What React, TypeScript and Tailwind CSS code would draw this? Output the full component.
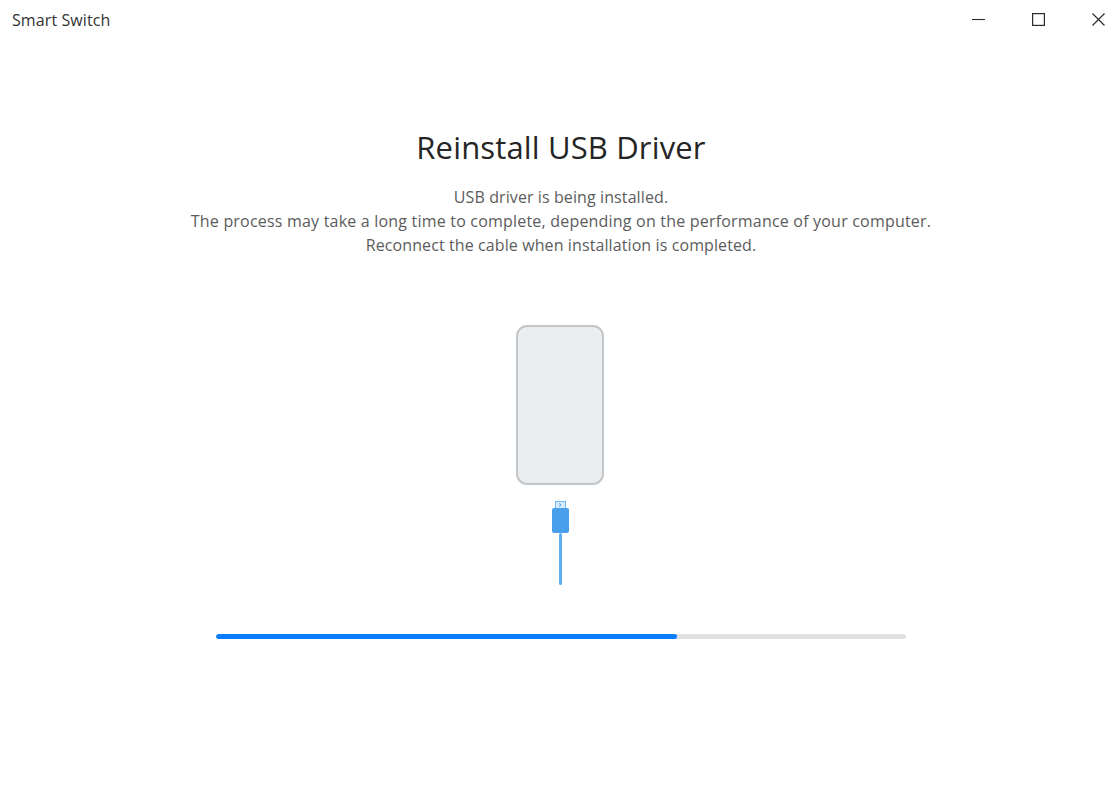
function WindowButtons() {
    return (
        <div className="flex flex-row items-center gap-[47px] pr-[13px]">
            <button className="flex items-center justify-center">
                <svg width="13" height="13" viewBox="0 0 13 13"><path d="M0 6.5h13" stroke="#2b2b2b" strokeWidth="1.1" /></svg>
            </button>
            <button className="flex items-center justify-center">
                <svg width="13" height="13" viewBox="0 0 13 13" fill="none"><rect x="0.6" y="0.6" width="11.8" height="11.8" stroke="#2b2b2b" strokeWidth="1.2" /></svg>
            </button>
            <button className="flex items-center justify-center">
                <svg width="13" height="13" viewBox="0 0 13 13" fill="none"><path d="M0.5 0.5l12 12M12.5 0.5l-12 12" stroke="#2b2b2b" strokeWidth="1.2" /></svg>
            </button>
        </div>
    );
}

function UsbCable() {
    return (
        <svg width="20" height="86" viewBox="0 0 20 86" className="mt-[16px]">
            <rect x="4.5" y="0.5" width="10" height="7" fill="#d6eafc" stroke="#72b9f5" strokeWidth="1" />
            <path d="M8 2.5l2 1.5-2 1.5" fill="none" stroke="#5aa9ee" strokeWidth="1" />
            <rect x="1" y="7" width="17" height="25" rx="2" fill="#4a9fec" />
            <rect x="8" y="32" width="3" height="52" rx="1.5" fill="#5cb0f2" />
        </svg>
    );
}

export default function App() {
    return (
        <div className="w-[1118px] h-[803px] bg-white flex flex-col overflow-hidden font-['Open_Sans','Noto_Sans',sans-serif]">
            <div className="h-[39px] flex flex-row items-center justify-between shrink-0">
                <div className="pl-[12px] text-[16px] tracking-[0.1px] text-[#333333]">Smart Switch</div>
                <WindowButtons />
            </div>
            <div className="flex flex-col items-center pl-[4px]">
                <h1 className="mt-[86px] text-[31px] leading-[44px] tracking-[0.15px] text-[#252525]">Reinstall USB Driver</h1>
                <div className="mt-[16px] text-center text-[16px] leading-[24px] text-[#5c5c5c]">
                    <p className="tracking-[0.1px]">USB driver is being installed.</p>
                    <p className="tracking-[0.2px]">The process may take a long time to complete, depending on the performance of your computer.</p>
                    <p className="tracking-[0.1px]">Reconnect the cable when installation is completed.</p>
                </div>
                <div className="mt-[68px] mr-[2px] w-[88px] h-[160px] rounded-[11px] border-2 border-[#c3c6c9] bg-[#e9edf0]" />
                <UsbCable />
                <div className="mt-[47px] w-[690px] h-[5px] rounded-full bg-[#e0e0e0] overflow-hidden">
                    <div className="w-[461px] h-full rounded-full bg-[#0a7cff]" />
                </div>
            </div>
        </div>
    );
}
